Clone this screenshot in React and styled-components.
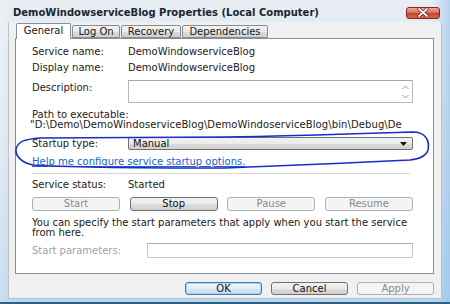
import React from 'react';
import styled, { createGlobalStyle } from 'styled-components';

const Global = createGlobalStyle`
  html, body { margin: 0; padding: 0; background: #ffffff; }
  body { font-family: "DejaVu Sans", Verdana, sans-serif; }
  * { box-sizing: border-box; }
`;

const Window = styled.div`
  position: relative;
  width: 450px;
  height: 304px;
  display: flex;
  flex-direction: column;
  overflow: hidden;
  border-bottom: 2px solid #2c6283;
  background:
    linear-gradient(90deg, rgba(255,255,255,0.25) 0%, rgba(255,255,255,0) 3%, rgba(255,255,255,0) 96%, rgba(140,190,235,0.55) 100%),
    linear-gradient(180deg, #e7edf3 0%, #dbe5ef 45%, #bcd5ec 100%);
`;

const TitleBar = styled.div`
  height: 22px;
  padding: 3px 10px 0 13px;
  display: flex;
  align-items: center;
  justify-content: space-between;
`;

const Title = styled.span`
  font: bold 10px "DejaVu Sans", Verdana, sans-serif;
  color: #1c2530;
  white-space: nowrap;
`;

const CloseBtn = styled.div`
  width: 34px;
  height: 12px;
  border: 1px solid #7c2a1e;
  border-radius: 3px;
  background: linear-gradient(180deg, #eeaa9c 0%, #d9735f 45%, #c4452f 55%, #d26a52 100%);
  display: flex;
  align-items: center;
  justify-content: center;
`;

const Body = styled.div`
  flex: 1;
  margin: 0 8px 3px 8px;
  border-left: 1px solid #b9c3cd;
  border-right: 1px solid #b9c3cd;
  border-bottom: 1px solid #b9c3cd;
  background: #f0f0f0;
  padding: 1px 7px 0 6px;
  display: flex;
  flex-direction: column;
`;

const TabStrip = styled.div`
  height: 15px;
  padding-left: 1px;
  display: flex;
  align-items: flex-end;
`;

const Tab = styled.div`
  position: relative;
  width: ${p => p.$w}px;
  height: ${p => (p.$active ? 16 : 13)}px;
  margin-bottom: ${p => (p.$active ? -1 : 0)}px;
  margin-right: 1px;
  z-index: ${p => (p.$active ? 2 : 0)};
  border: 1px solid #898c95;
  border-bottom: ${p => (p.$active ? 'none' : '1px solid #898c95')};
  border-radius: 2px 2px 0 0;
  background: ${p => (p.$active ? '#ffffff' : 'linear-gradient(180deg, #f3f3f3 0%, #ebebeb 50%, #dddddd 51%, #cfcfcf 100%)')};
  font-size: 10px;
  line-height: ${p => (p.$active ? 14 : 11)}px;
  color: #1a1a1a;
  text-align: center;
  white-space: nowrap;
`;

const Panel = styled.div`
  height: 236px;
  border: 1px solid #898c95;
  background: #ffffff;
  padding: 0 20px 0 16px;
  display: flex;
  flex-direction: column;
  font-size: 10px;
  color: #222;
`;

const Field = styled.div`
  display: grid;
  grid-template-columns: ${p => p.$label || 96}px 1fr;
  align-items: ${p => p.$align || 'center'};
  height: ${p => p.$h}px;
  margin-top: ${p => p.$mt}px;
  line-height: 12px;
`;

const Label = styled.span`
  color: ${p => (p.$disabled ? '#a3a3a3' : '#222')};
  padding-top: ${p => p.$pt || 0}px;
  white-space: nowrap;
`;

const Value = styled.span`
  color: #222;
  white-space: nowrap;
`;

const TextArea = styled.div`
  height: 23px;
  border: 1px solid #b5b9bf;
  border-top-color: #a3a7ad;
  background: #fff;
  display: flex;
  justify-content: flex-end;
`;

const ScrollCol = styled.div`
  width: 14px;
  display: flex;
  flex-direction: column;
  justify-content: space-between;
  align-items: center;
  padding: 4px 0 3px;
`;

const PathBlock = styled.div`
  margin-top: 7px;
  line-height: 10px;
  white-space: nowrap;
`;

const PathValue = styled.div`
  margin-left: -2px;
  letter-spacing: 0.1px;
`;

const Select = styled.div`
  height: 13px;
  border: 1px solid #707070;
  border-radius: 2px;
  background: linear-gradient(180deg, #f2f2f2 0%, #ebebeb 50%, #dddddd 51%, #cfcfcf 100%);
  display: flex;
  align-items: center;
  justify-content: space-between;
  padding: 0 5px 0 4px;
  line-height: 11px;
  color: #111;
`;

const LinkRow = styled.div`
  margin-top: 6px;
  height: 12px;
  line-height: 12px;
`;

const Link = styled.a`
  color: #1565cf;
  text-decoration: underline;
  white-space: nowrap;
`;

const Separator = styled.div`
  margin-top: 5px;
  margin-right: 3px;
  height: 1px;
  background: #d6d6d6;
`;

const ButtonRow = styled.div`
  margin-top: 6px;
  display: flex;
  justify-content: space-between;
`;

const Button = styled.div`
  width: ${p => p.$w}px;
  height: ${p => p.$h}px;
  border: 1px solid ${p => (p.$disabled ? '#adb2b5' : p.$default ? '#3c7fb1' : '#707070')};
  border-radius: 3px;
  background: ${p => (p.$disabled
    ? '#f4f4f4'
    : p.$default
      ? 'linear-gradient(180deg, #f0f6fb 0%, #e5eef6 50%, #d6e4f0 51%, #c9dbeb 100%)'
      : 'linear-gradient(180deg, #f2f2f2 0%, #ebebeb 50%, #dddddd 51%, #cfcfcf 100%)')};
  box-shadow: ${p => (p.$default ? 'inset 0 0 0 1px #a9d3f0' : 'none')};
  color: ${p => (p.$disabled ? '#8a8a8a' : '#111')};
  font-size: 10px;
  line-height: ${p => p.$h - 2}px;
  text-align: center;
`;

const Paragraph = styled.p`
  margin: 7px 0 0;
  line-height: 10px;
  color: #1a1a1a;
`;

const Input = styled.div`
  height: 15px;
  border: 1px solid #c3c7cc;
  border-top-color: #abadb3;
  background: #fff;
`;

const Footer = styled.div`
  margin-top: 8px;
  display: flex;
  justify-content: flex-end;
  gap: 9px;
`;

const Overlay = styled.svg`
  position: absolute;
  left: 0;
  top: 0;
  pointer-events: none;
`;

const Chevron = ({ up }) => (
  <svg width="7" height="5" viewBox="0 0 7 5">
    <path d={up ? 'M0.5 4 L3.5 1 L6.5 4' : 'M0.5 1 L3.5 4 L6.5 1'} fill="none" stroke="#9a9a9a" strokeWidth="1" />
  </svg>
);

export default function App() {
  return (
    <>
      <Global />
      <Window>
        <TitleBar>
          <Title>DemoWindowserviceBlog Properties (Local Computer)</Title>
          <CloseBtn>
            <svg width="12" height="9" viewBox="0 0 12 9">
              <path d="M2 1 L10 8 M10 1 L2 8" stroke="#6a1d12" strokeWidth="3.2" strokeLinecap="round" />
              <path d="M2 1 L10 8 M10 1 L2 8" stroke="#ffffff" strokeWidth="1.7" strokeLinecap="round" />
            </svg>
          </CloseBtn>
        </TitleBar>
        <Body>
          <TabStrip>
            <Tab $active $w={55}>General</Tab>
            <Tab $w={48}>Log On</Tab>
            <Tab $w={60}>Recovery</Tab>
            <Tab $w={86}>Dependencies</Tab>
          </TabStrip>
          <Panel>
            <Field $h={12} $mt={7}>
              <Label>Service name:</Label>
              <Value>DemoWindowserviceBlog</Value>
            </Field>
            <Field $h={12} $mt={4}>
              <Label>Display name:</Label>
              <Value>DemoWindowserviceBlog</Value>
            </Field>
            <Field $h={23} $mt={6} $align="start">
              <Label $pt={2}>Description:</Label>
              <TextArea>
                <ScrollCol>
                  <Chevron up />
                  <Chevron />
                </ScrollCol>
              </TextArea>
            </Field>
            <PathBlock>
              <div>Path to executable:</div>
              <PathValue>{'"D:\\Demo\\DemoWindoserviceBlog\\DemoWindoserviceBlog\\bin\\Debug\\De'}</PathValue>
            </PathBlock>
            <Field $h={13} $mt={7}>
              <Label>Startup type:</Label>
              <Select>
                <span>Manual</span>
                <svg width="7" height="4" viewBox="0 0 7 4">
                  <path d="M0 0 L7 0 L3.5 4 Z" fill="#111" />
                </svg>
              </Select>
            </Field>
            <LinkRow>
              <Link>Help me configure service startup options.</Link>
            </LinkRow>
            <Separator />
            <Field $h={12} $mt={5}>
              <Label>Service status:</Label>
              <Value>Started</Value>
            </Field>
            <ButtonRow>
              <Button $w={88} $h={14} $disabled>Start</Button>
              <Button $w={88} $h={14}>Stop</Button>
              <Button $w={88} $h={14} $disabled>Pause</Button>
              <Button $w={88} $h={14} $disabled>Resume</Button>
            </ButtonRow>
            <Paragraph>
              You can specify the start parameters that apply when you start the service from here.
            </Paragraph>
            <Field $h={15} $mt={5} $label={115}>
              <Label $disabled>Start parameters:</Label>
              <Input />
            </Field>
          </Panel>
          <Footer>
            <Button $w={77} $h={13} $default>OK</Button>
            <Button $w={77} $h={13}>Cancel</Button>
            <Button $w={77} $h={13} $disabled>Apply</Button>
          </Footer>
        </Body>
        <Overlay width="450" height="304" viewBox="0 0 450 304">
          <path
            d="M16 149 C18 141, 26 139, 40 138 L225 137 C300 136, 380 133, 413 132 C425 132, 430 140, 428 150 C426 157, 418 159, 410 160 C350 163, 280 166, 225 168 C150 168, 60 167, 33 165 C22 163, 15 156, 16 149 Z"
            fill="none"
            stroke="#1d2bc8"
            strokeWidth="1.6"
          />
        </Overlay>
      </Window>
    </>
  );
}
